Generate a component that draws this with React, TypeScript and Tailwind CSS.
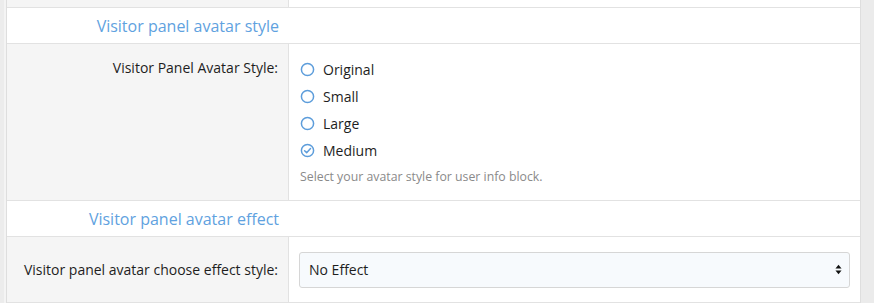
import React from "react";

const font = { fontFamily: '"Open Sans", "Noto Sans", sans-serif' };

function RadioIcon({ checked }: { checked?: boolean }) {
  return (
    <svg viewBox="0 0 16 16" className="w-[15px] h-[15px] shrink-0" fill="none" stroke="#5d9ddb" strokeWidth="1.6">
      <circle cx="8" cy="8" r="6.5" />
      {checked && <path d="M4.9 8.2 7.1 10.3 11.2 5.9" strokeLinecap="round" strokeLinejoin="round" />}
    </svg>
  );
}

function Header({ title }: { title: string }) {
  return (
    <div className="flex h-[36px] bg-white border-b border-[#e2e2e2]">
      <div className="w-[282px] flex items-center justify-end pr-[10px] text-[16px] text-[#5fa2e0]">{title}</div>
    </div>
  );
}

export default function App() {
  const options = ["Original", "Small", "Large", "Medium"];
  return (
    <div className="flex w-full h-[303px] bg-[#eeeeee] overflow-hidden" style={font}>
      <div className="w-[6px] bg-[#ececec] border-r-2 border-[#f4f4f4]" />
      <div className="w-[855px] flex flex-col bg-white border-x border-[#dedede]">
        {/* tail of the previous row */}
        <div className="flex h-[8px] border-b border-[#e2e2e2]">
          <div className="w-[282px] bg-[#f5f5f5] border-r border-[#e2e2e2]" />
          <div className="flex-1" />
        </div>

        <Header title="Visitor panel avatar style" />

        <div className="flex h-[157px] border-b border-[#e2e2e2]">
          <div className="w-[282px] bg-[#f5f5f5] border-r border-[#e2e2e2] pt-[13px] pr-[10px] text-right text-[14px] text-[#1e1e1e]">
            Visitor Panel Avatar Style:
          </div>
          <div className="flex-1 pt-[12px] pl-[11px]">
            {options.map((o) => (
              <div key={o} className="flex items-center gap-[8px] h-[27px] text-[14px] text-[#1e1e1e]">
                <RadioIcon checked={o === "Medium"} />
                <span>{o}</span>
              </div>
            ))}
            <div className="pt-[4px] text-[12.3px] text-[#8a8a8a]">Select your avatar style for user info block.</div>
          </div>
        </div>

        <Header title="Visitor panel avatar effect" />

        <div className="flex h-[66px] border-b border-[#e2e2e2]">
          <div className="w-[282px] bg-[#f5f5f5] border-r border-[#e2e2e2] flex items-center justify-end pr-[10px] text-[14px] text-[#1e1e1e]">
            Visitor panel avatar choose effect style:
          </div>
          <div className="flex-1 flex items-center px-[10px]">
            <div className="flex items-center w-full h-[36px] rounded-[3px] border border-[#d6d6d6] bg-[#f7fafd] pl-[9px] pr-[7px] text-[14px] text-[#1e1e1e]">
              <span className="flex-1">No Effect</span>
              <svg viewBox="0 0 8 12" className="w-[7px] h-[11px]" fill="#111">
                <path d="M4 0.5 7.5 4.8H0.5Z" />
                <path d="M4 11.5 7.5 7.2H0.5Z" />
              </svg>
            </div>
          </div>
        </div>
      </div>
      <div className="flex-1 bg-[#ebebeb]" />
    </div>
  );
}
